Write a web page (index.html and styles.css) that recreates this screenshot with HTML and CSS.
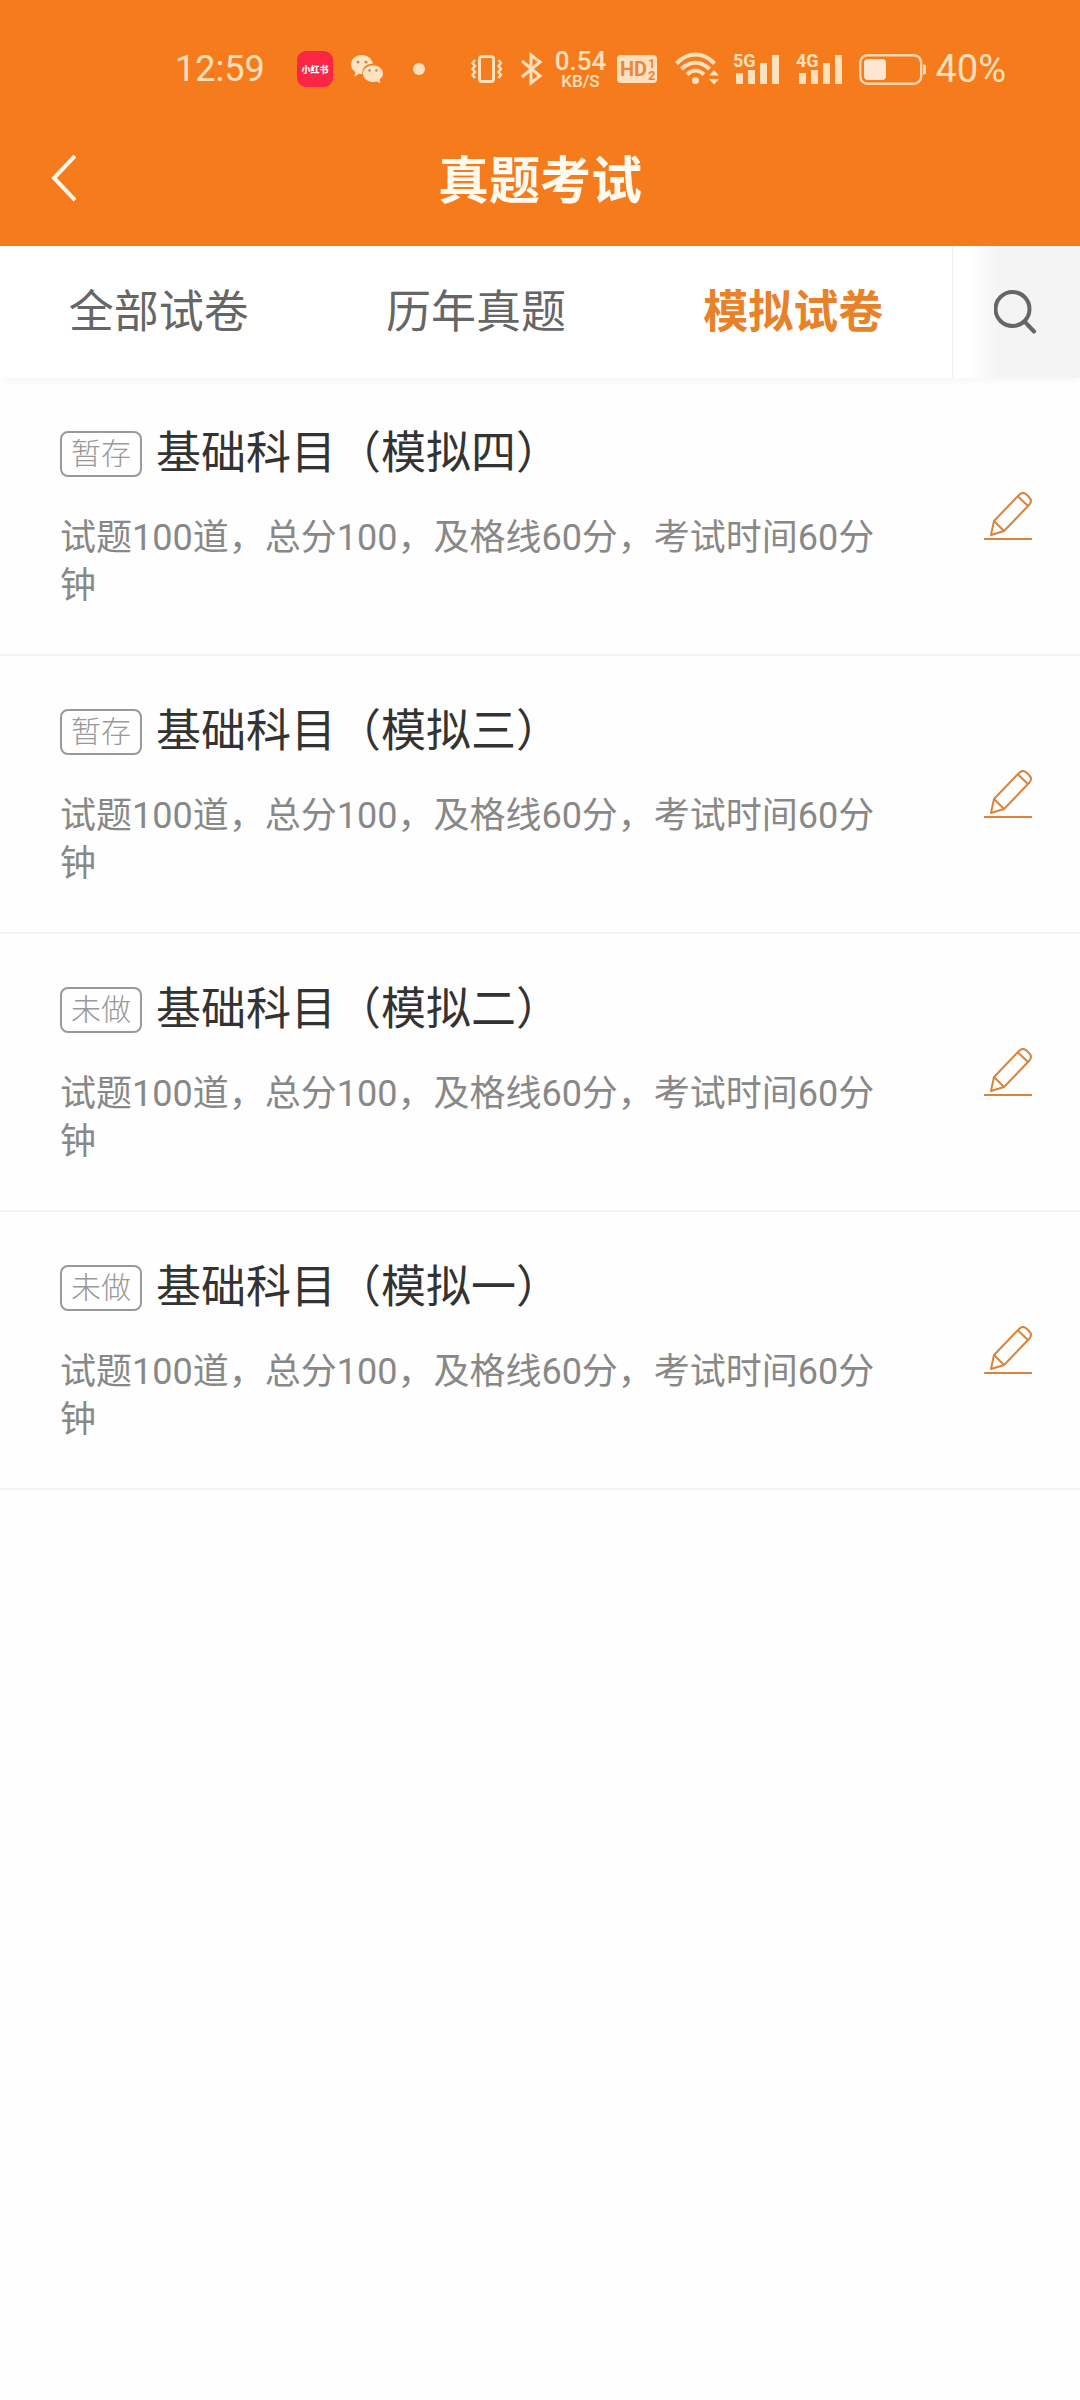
FILE: index.html
```html
<!DOCTYPE html>
<html lang="zh-CN">
<head>
<meta charset="utf-8">
<meta name="viewport" content="width=device-width, initial-scale=1">
<title>真题考试</title>
<link rel="stylesheet" href="styles.css">
</head>
<body>
<header class="header">
  <div class="status">
    <div class="status-left">
      <span class="clock">12:59</span>
      <svg class="app-icon" width="36" height="36" viewBox="0 0 36 36" role="img" aria-label="小红书"><rect width="36" height="36" rx="9" fill="#fb2546"/><text class="app-text" x="18" y="22" text-anchor="middle">小红书</text></svg>
      <svg class="wechat" width="32" height="28" viewBox="0 0 32 28" role="img" aria-label="微信">
        <path fill="#ffe3c3" d="M11 0C5 0 0 4 0 9.500c0 3 1.700 5.700 4.300 7.500L3.500 21.500 8 18.700c1.200.2 2.300.3 3.500.3C10.500 12.500 16 8.500 22 8.800 21 3.500 16.500 0 11 0z"/>
        <path fill="#ffe3c3" d="M22 10.300c-5.500 0-10 3.700-10 8.300s4.500 8.300 10 8.300c1.200 0 2.400-.2 3.500-.5l4 1.600-.9-3.600c2.100-1.500 3.400-3.500 3.400-5.800 0-4.600-4.500-8.300-10-8.300z"/>
        <g fill="#c98a50"><circle cx="7" cy="7" r="1.500"/><circle cx="15" cy="7" r="1.500"/><circle cx="18.500" cy="15.500" r="1.300"/><circle cx="25.500" cy="15.500" r="1.300"/></g>
      </svg>
      <span class="dot"></span>
    </div>
    <div class="status-right">
      <svg width="42" height="36" viewBox="0 0 42 36" fill="none" stroke="#ffe0bd" stroke-width="3"><rect x="8.500" y="5.500" width="14" height="25" rx="2.500"/><path stroke-width="2.500" stroke-linejoin="round" d="M4 9l-2.500 3L4 15l-2.500 3L4 21l-2.500 3L4 27M27.500 9l2.500 3-2.500 3 2.500 3-2.500 3 2.500 3-2.500 3"/></svg>
      <svg width="26" height="36" viewBox="0 0 26 36" fill="none" stroke="#ffe0bd" stroke-width="3"><path d="M1 10l18 15-9 7V4l9 7L1 26"/></svg>
      <span class="net"><span class="net-rate">0.54</span><span class="net-unit">KB/S</span></span>
      <svg width="50" height="36" viewBox="0 0 50 36" role="img" aria-label="HD"><rect y="4" width="40" height="28" rx="4" fill="#ffe0bd"/><g class="hd"><text class="hd-main" x="3" y="25">HD</text><text class="hd-sub" x="31" y="17">1</text><text class="hd-sub" x="31" y="29">2</text></g></svg>
      <svg width="50" height="36" viewBox="0 0 50 36" fill="none" stroke="#ffe0bd" stroke-width="4"><path d="M1.500 12.500C13 .5 28 .5 39.500 12.500M6.500 18c8.500-8.500 19.500-8.500 28 0M12 23.500c5.500-5.200 11.500-5.200 17 0"/><circle cx="20.500" cy="29.500" r="3.500" fill="#ffe0bd" stroke="none"/><path fill="#ffe0bd" stroke="none" d="M34 24.500l5-5.500 5 5.500zM34 28l5 5.500 5-5.500z"/></svg>
      <svg width="55" height="36" viewBox="0 0 55 36" fill="#ffe0bd" role="img" aria-label="5G"><text class="sig" x="0" y="16">5G</text><path d="M3 22h7v11H3zM15 19h7v14h-7zM27 12h7v21h-7zM39 4h7v29h-7z"/></svg>
      <svg width="55" height="36" viewBox="0 0 55 36" fill="#ffe0bd" role="img" aria-label="4G"><text class="sig" x="0" y="16">4G</text><path d="M3 22h7v11H3zM15 19h7v14h-7zM27 12h7v21h-7zM39 4h7v29h-7z"/></svg>
      <svg width="68" height="36" viewBox="0 0 68 36" role="img" aria-label="电量"><rect x="1.200" y="4.200" width="61" height="28.500" rx="7.500" fill="none" stroke="#ffd9ae" stroke-width="2.400"/><rect x="5" y="8" width="22" height="21" rx="4" fill="#ffe6d0"/><path d="M64 13.500h1.500q1.500 0 1.500 2v6q0 2-1.500 2H64z" fill="#ffd9ae"/></svg>
      <span class="charge">40%</span>
    </div>
  </div>
  <div class="nav">
    <button class="back" type="button" aria-label="返回"><svg width="26" height="48" viewBox="0 0 26 48" fill="none" stroke="#fff8e8" stroke-width="4"><path d="M25 1L4 23l21 22"/></svg></button>
    <h1 class="title">真题考试</h1>
    <span></span>
  </div>
</header>
<nav class="tabs">
  <a class="tab" href="#all">全部试卷</a>
  <a class="tab" href="#past">历年真题</a>
  <a class="tab tab-active" href="#mock" aria-current="page">模拟试卷</a>
  <button class="search" type="button" aria-label="搜索"><svg width="44" height="44" viewBox="0 0 44 44" fill="none" stroke="#666" stroke-width="4" stroke-linecap="round"><circle cx="18.500" cy="19" r="17"/><path d="M31 32l9 9.500"/></svg></button>
</nav>
<svg class="defs" aria-hidden="true"><symbol id="pencil" viewBox="0 0 48 48"><g fill="none" stroke="#d9843c" stroke-width="2" stroke-linejoin="round"><path d="M7 43l3-14L35 3q4-4 8 0l2 2q4 4 0 8L20 39z"/><path d="M34 4.500l10 9.500M10 29l10 10"/><path d="M0 47h48"/></g></symbol></svg>
<main>
  <ul class="list">
    <li class="row">
      <div class="info"><h2 class="name"><span class="badge">暂存</span>基础科目（模拟四）</h2><p class="desc">试题100道，总分100，及格线60分，考试时间60分钟</p></div>
      <button class="edit" type="button" aria-label="开始考试"><svg width="48" height="48"><use href="#pencil"/></svg></button>
    </li>
    <li class="row">
      <div class="info"><h2 class="name"><span class="badge">暂存</span>基础科目（模拟三）</h2><p class="desc">试题100道，总分100，及格线60分，考试时间60分钟</p></div>
      <button class="edit" type="button" aria-label="开始考试"><svg width="48" height="48"><use href="#pencil"/></svg></button>
    </li>
    <li class="row">
      <div class="info"><h2 class="name"><span class="badge">未做</span>基础科目（模拟二）</h2><p class="desc">试题100道，总分100，及格线60分，考试时间60分钟</p></div>
      <button class="edit" type="button" aria-label="开始考试"><svg width="48" height="48"><use href="#pencil"/></svg></button>
    </li>
    <li class="row">
      <div class="info"><h2 class="name"><span class="badge">未做</span>基础科目（模拟一）</h2><p class="desc">试题100道，总分100，及格线60分，考试时间60分钟</p></div>
      <button class="edit" type="button" aria-label="开始考试"><svg width="48" height="48"><use href="#pencil"/></svg></button>
    </li>
  </ul>
</main>
</body>
</html>
```
FILE: styles.css
```css
* {
  box-sizing: border-box;
}

body {
  margin: 0;
  background: #fefefe;
  color: #333;
  font-family: Roboto, "Noto Sans CJK SC", sans-serif;
}

h1, h2, p, ul {
  margin: 0;
  padding: 0;
  font-weight: 400;
}

button {
  border: 0;
  padding: 0;
  background: none;
}

svg {
  display: block;
  flex: none;
}

.defs {
  width: 0;
  height: 0;
  position: absolute;
}

.header {
  background: #f67b1d;
}

/* Status bar */
.status {
  display: flex;
  justify-content: space-between;
  height: 112px;
  padding: 26px 74px 0 175px;
  color: #ffe0bd;
}

.status-left,
.status-right {
  display: flex;
  align-items: center;
}

.status-right {
  gap: 8px;
}

.clock {
  font-size: 36px;
  line-height: 40px;
}

.charge {
  font-size: 38px;
  line-height: 40px;
}

.app-icon {
  margin-left: 32px;
}

.app-text {
  fill: #fff;
  font-size: 9px;
  font-weight: 900;
}

.wechat {
  margin-left: 18px;
}

.dot {
  width: 12px;
  height: 12px;
  margin-left: 30px;
  border-radius: 50%;
  background: #ffe0bd;
}

.net {
  display: flex;
  flex-direction: column;
  align-items: center;
  width: 54px;
  padding-right: 4px;
  font-weight: 500;
}

.net-rate {
  font-size: 26px;
  line-height: 24px;
}

.net-unit {
  font-size: 17px;
  line-height: 16px;
}

.hd {
  fill: #e58843;
  font-weight: 700;
}

.hd-main {
  font-size: 20px;
}

.hd-sub {
  font-size: 13px;
}

.sig {
  font-size: 18px;
  font-weight: 700;
}

/* Title bar */
.nav {
  display: grid;
  grid-template-columns: 1fr auto 1fr;
  align-items: center;
  height: 134px;
  padding: 0 50px;
}

.back {
  justify-self: start;
}

.title {
  padding-top: 6px;
  color: #fffaf0;
  font-size: 51px;
  font-weight: 700;
  line-height: 74px;
}

/* Tabs */
.tabs {
  display: flex;
  height: 132px;
  background: #fff;
  box-shadow: 0 6px 4px -2px #f9f9f9;
}

.tab {
  display: flex;
  flex: 1;
  align-items: center;
  justify-content: center;
  padding-bottom: 8px;
  color: #666;
  font-size: 45px;
  text-decoration: none;
}

.tab-active {
  color: #e8822a;
  font-weight: 700;
}

.search {
  display: flex;
  align-items: center;
  justify-content: center;
  width: 128px;
  border-left: 1px solid #eee;
  background: linear-gradient(to right, #fff 14px, #f4f4f4 48px);
}

/* Paper list */
.list {
  list-style: none;
}

.row {
  display: flex;
  align-items: center;
  justify-content: space-between;
  padding: 42px 48px 42px 60px;
  border-bottom: 2px solid #f4f4f4;
}

.info {
  flex: 1;
  max-width: 832px;
}

.name {
  display: flex;
  align-items: center;
  gap: 14px;
  font-size: 45px;
  line-height: 68px;
}

.badge {
  padding: 0 9px;
  border: 2px solid #999;
  border-radius: 8px;
  color: #999;
  font-size: 30px;
  font-weight: 300;
  line-height: 42px;
}

.desc {
  margin-top: 26px;
  padding-bottom: 2px;
  color: #888;
  font-size: 36px;
  line-height: 48px;
}
```
